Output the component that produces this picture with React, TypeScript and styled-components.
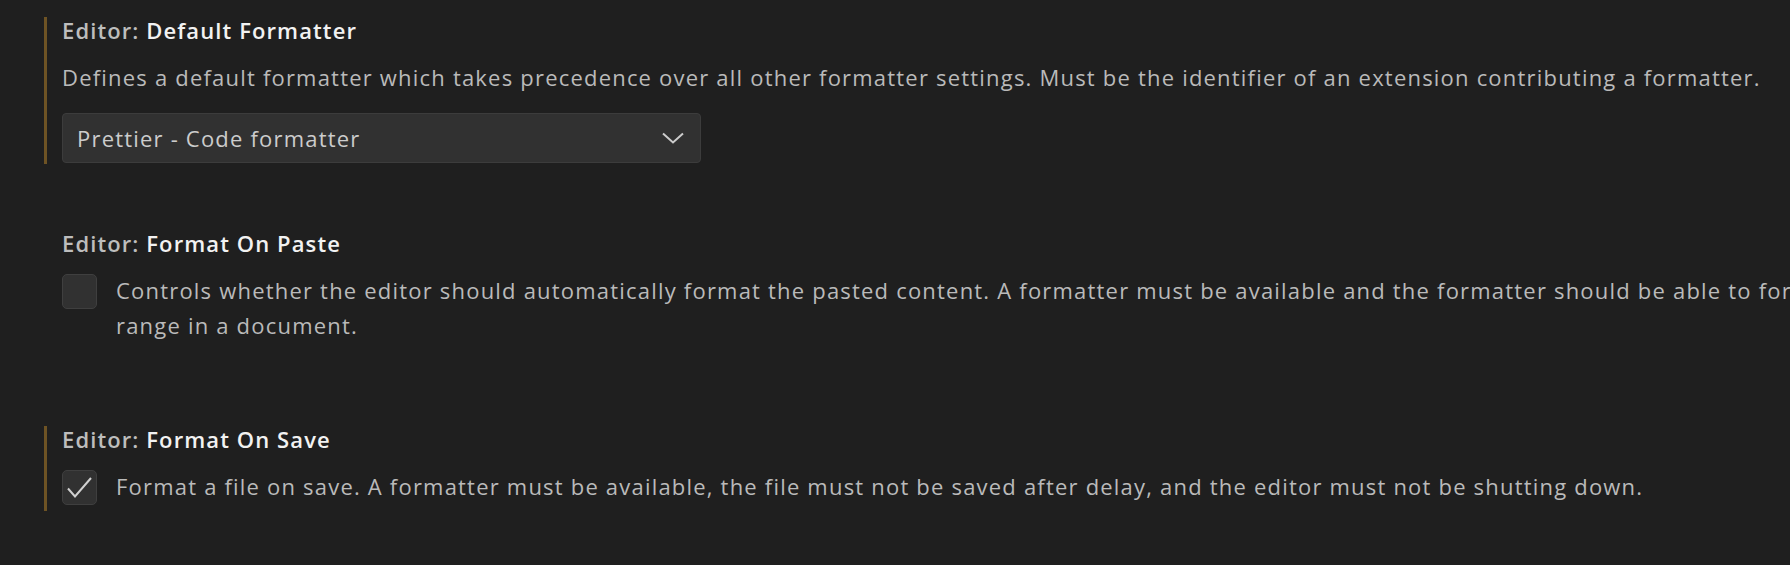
import styled, { createGlobalStyle } from 'styled-components';

const GlobalStyle = createGlobalStyle`
  html, body {
    margin: 0;
    padding: 0;
    background: #1f1f1f;
    overflow: hidden;
  }
  body {
    font-family: 'Open Sans', 'Noto Sans', sans-serif;
  }
`;

const Page = styled.div`
  width: 1790px;
  height: 565px;
  padding: 17px 0 0 44px;
  box-sizing: border-box;
  display: flex;
  flex-direction: column;
`;

const Item = styled.section<{ $modified?: boolean; $after: number; $pad: number }>`
  width: 1900px;
  border-left: 3px solid ${(p) => (p.$modified ? '#6e5324' : 'transparent')};
  padding: 0 0 ${(p) => p.$pad}px 15px;
  margin-bottom: ${(p) => p.$after}px;
  display: flex;
  flex-direction: column;
`;

const Title = styled.div`
  font-size: 22px;
  line-height: 27px;
  letter-spacing: 1.1px;
  font-weight: 600;
  color: #f2f2f2;
  white-space: nowrap;
`;

const Category = styled.span`
  color: #bdbdbd;
`;

const Description = styled.div`
  margin-top: 16px;
  font-size: 22px;
  line-height: 34px;
  letter-spacing: 1.2px;
  color: #bababa;
  white-space: nowrap;
`;

const Select = styled.div`
  margin-top: 19px;
  width: 639px;
  height: 50px;
  box-sizing: border-box;
  background: #313131;
  border: 1px solid #3c3c3c;
  border-radius: 4px;
  padding: 0 16px 0 14px;
  display: flex;
  align-items: center;
  justify-content: space-between;
  font-size: 22px;
  letter-spacing: 1.2px;
  color: #cccccc;
`;

const Row = styled.div`
  margin-top: 17px;
  display: flex;
  align-items: flex-start;
  gap: 19px;
`;

const Box = styled.div`
  flex: none;
  width: 35px;
  height: 35px;
  box-sizing: border-box;
  background: #313131;
  border: 1px solid #3f3f3f;
  border-radius: 5px;
  display: flex;
  align-items: center;
  justify-content: center;
`;

const RowText = styled.div<{ $width?: number }>`
  width: ${(p) => (p.$width ? `${p.$width}px` : 'auto')};
  font-size: 22px;
  line-height: 35px;
  letter-spacing: 1.2px;
  color: #bababa;
  margin-top: -1px;
`;

const Chevron = () => (
  <svg width="22" height="12" viewBox="0 0 22 12" fill="none">
    <path d="M1 1.5 L11 10.5 L21 1.5" stroke="#cccccc" strokeWidth="2" />
  </svg>
);

const Check = () => (
  <svg width="27" height="23" viewBox="0 0 27 23" fill="none">
    <path d="M2 12.5 L9 20.5 L25 2" stroke="#d0d0d0" strokeWidth="2" />
  </svg>
);

const App = () => {
  return (
    <>
      <GlobalStyle />
      <Page>
        <Item $modified $after={66} $pad={1}>
          <Title>
            <Category>Editor: </Category>Default Formatter
          </Title>
          <Description>
            Defines a default formatter which takes precedence over all other formatter settings. Must be the
            identifier of an extension contributing a formatter.
          </Description>
          <Select>
            <span>Prettier - Code formatter</span>
            <Chevron />
          </Select>
        </Item>

        <Item $after={77} $pad={6}>
          <Title>
            <Category>Editor: </Category>Format On Paste
          </Title>
          <Row>
            <Box />
            <RowText $width={1780}>
              Controls whether the editor should automatically format the pasted content. A formatter must be
              available and the formatter should be able to format a range in a document.
            </RowText>
          </Row>
        </Item>

        <Item $modified $after={0} $pad={6}>
          <Title>
            <Category>Editor: </Category>Format On Save
          </Title>
          <Row>
            <Box>
              <Check />
            </Box>
            <RowText>
              Format a file on save. A formatter must be available, the file must not be saved after delay, and the
              editor must not be shutting down.
            </RowText>
          </Row>
        </Item>
      </Page>
    </>
  );
};

export default App;
